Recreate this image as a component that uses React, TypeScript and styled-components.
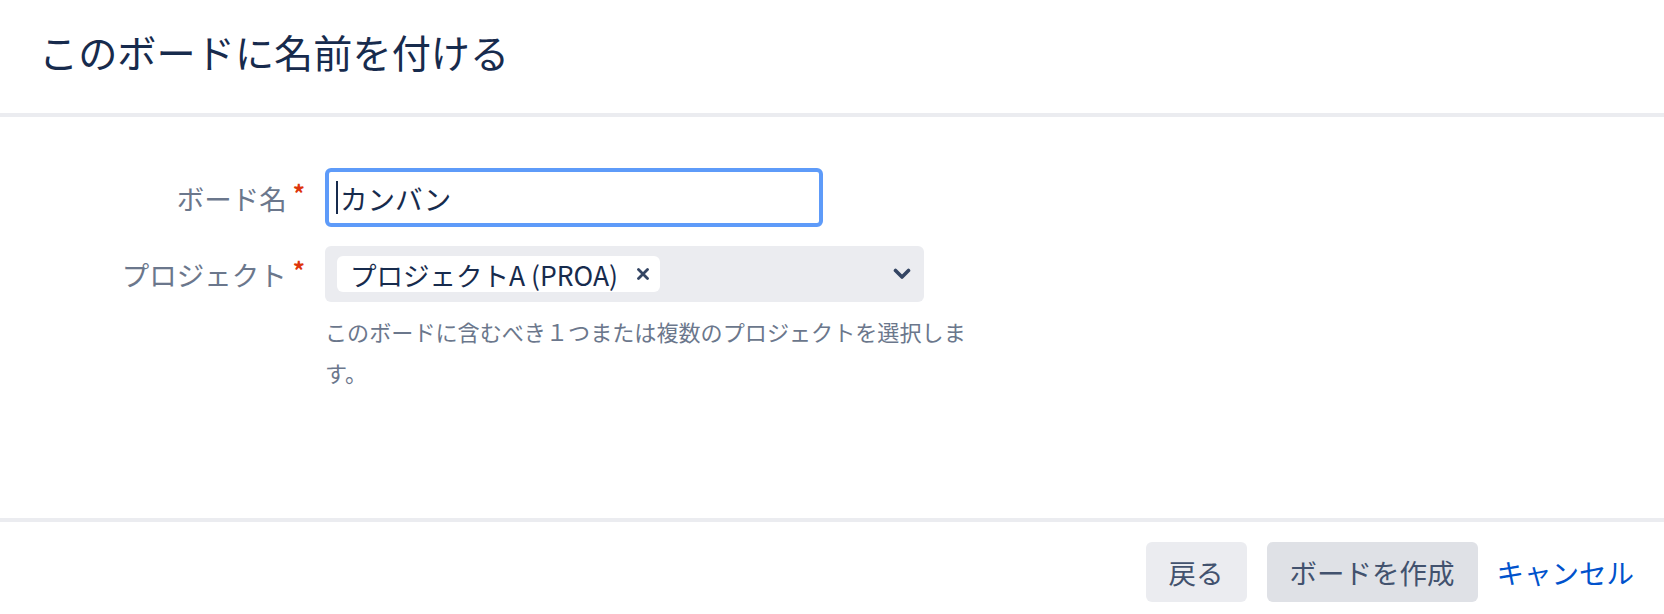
import React from "react";
import styled, { createGlobalStyle } from "styled-components";

const GlobalStyle = createGlobalStyle`
  html, body {
    margin: 0;
    padding: 0;
    background: #ffffff;
  }
  body {
    font-family: "Noto Sans CJK JP", "Noto Sans", sans-serif;
    color: #172b4d;
  }
  * { box-sizing: border-box; }
`;

const Dialog = styled.div`
  width: 1664px;
  height: 614px;
  display: flex;
  flex-direction: column;
  background: #fff;
`;

const Header = styled.header`
  height: 117px;
  padding: 0 40px 10px 39px;
  display: flex;
  align-items: center;
  border-bottom: 4px solid #ebecf0;
`;

const Title = styled.h2`
  margin: 0;
  font-size: 39.2px;
  font-weight: 400;
  line-height: 1.2;
  color: #172b4d;
`;

const Body = styled.div`
  height: 401px;
  padding-top: 51px;
`;

const Form = styled.div`
  display: grid;
  grid-template-columns: 305px auto;
  column-gap: 20px;
  row-gap: 19px;
  align-items: start;
`;

const Label = styled.label<{ $h: number }>`
  height: ${(p) => p.$h}px;
  display: flex;
  align-items: center;
  justify-content: flex-end;
  font-size: 27.5px;
  color: #6b778c;
  white-space: nowrap;
`;

const Required = styled.span`
  color: #de350b;
  font-size: 24px;
  font-weight: 700;
  line-height: 1;
  align-self: center;
  margin: -9px 0 0 6px;
`;

const TextField = styled.div`
  width: 498px;
  height: 59px;
  border: 4px solid #5e9bf9;
  border-radius: 6px;
  padding: 0 10px 0 7px;
  display: flex;
  align-items: center;
  font-size: 27.5px;
  color: #172b4d;
  background: #fff;
`;

const Caret = styled.span`
  width: 2px;
  height: 33px;
  background: #172b4d;
  margin-right: 2px;
`;

const FieldColumn = styled.div`
  display: flex;
  flex-direction: column;
`;

const Select = styled.div`
  width: 599px;
  height: 56px;
  background: #ebecf0;
  border-radius: 6px;
  padding: 0 13px 0 12px;
  display: flex;
  align-items: center;
  justify-content: space-between;
`;

const Tag = styled.span`
  height: 36px;
  background: #fff;
  border-radius: 6px;
  padding: 0 11px 0 13px;
  display: inline-flex;
  align-items: center;
  gap: 19px;
  font-size: 26.5px;
  color: #172b4d;
  white-space: nowrap;
`;

const IconBox = styled.span`
  display: inline-flex;
  align-items: center;
  color: #344563;
`;

const Help = styled.p`
  width: 650px;
  margin: 9px 0 0;
  font-size: 22.1px;
  line-height: 41px;
  color: #6b778c;
`;

const Footer = styled.footer`
  flex: 1;
  border-top: 4px solid #ebecf0;
  padding: 20px 30px 12px;
  display: flex;
  justify-content: flex-end;
  align-items: flex-start;
`;

const Button = styled.button<{ $bg: string }>`
  height: 60px;
  padding: 0 23px;
  margin-left: 20px;
  border: none;
  border-radius: 6px;
  background: ${(p) => p.$bg};
  font-family: inherit;
  font-size: 27.5px;
  color: #42526e;
  display: inline-flex;
  align-items: center;
  cursor: pointer;
`;

const LinkButton = styled.button`
  height: 60px;
  padding: 0;
  margin-left: 19px;
  border: none;
  background: transparent;
  font-family: inherit;
  font-size: 27.5px;
  color: #0052cc;
  display: inline-flex;
  align-items: center;
  cursor: pointer;
`;

const CloseIcon = () => (
  <IconBox>
    <svg width="12" height="12" viewBox="0 0 12 12">
      <path d="M1.5 1.5 L10.5 10.5 M10.5 1.5 L1.5 10.5" stroke="currentColor" strokeWidth="2.8" strokeLinecap="round" fill="none" />
    </svg>
  </IconBox>
);

const Chevron = () => (
  <IconBox>
    <svg width="18" height="12" viewBox="0 0 18 12">
      <path d="M2.5 2.5 L9 9 L15.5 2.5" stroke="currentColor" strokeWidth="3.6" strokeLinecap="round" strokeLinejoin="round" fill="none" />
    </svg>
  </IconBox>
);

export default function App() {
  return (
    <>
      <GlobalStyle />
      <Dialog>
        <Header>
          <Title>このボードに名前を付ける</Title>
        </Header>
        <Body>
          <Form>
            <Label $h={59}>
              ボード名<Required>*</Required>
            </Label>
            <TextField>
              <Caret />
              カンバン
            </TextField>
            <Label $h={56}>
              プロジェクト<Required>*</Required>
            </Label>
            <FieldColumn>
              <Select>
                <Tag>
                  プロジェクトA (PROA)
                  <CloseIcon />
                </Tag>
                <Chevron />
              </Select>
              <Help>このボードに含むべき１つまたは複数のプロジェクトを選択します。</Help>
            </FieldColumn>
          </Form>
        </Body>
        <Footer>
          <Button $bg="#ebecf0">戻る</Button>
          <Button $bg="#dfe1e6">ボードを作成</Button>
          <LinkButton>キャンセル</LinkButton>
        </Footer>
      </Dialog>
    </>
  );
}
